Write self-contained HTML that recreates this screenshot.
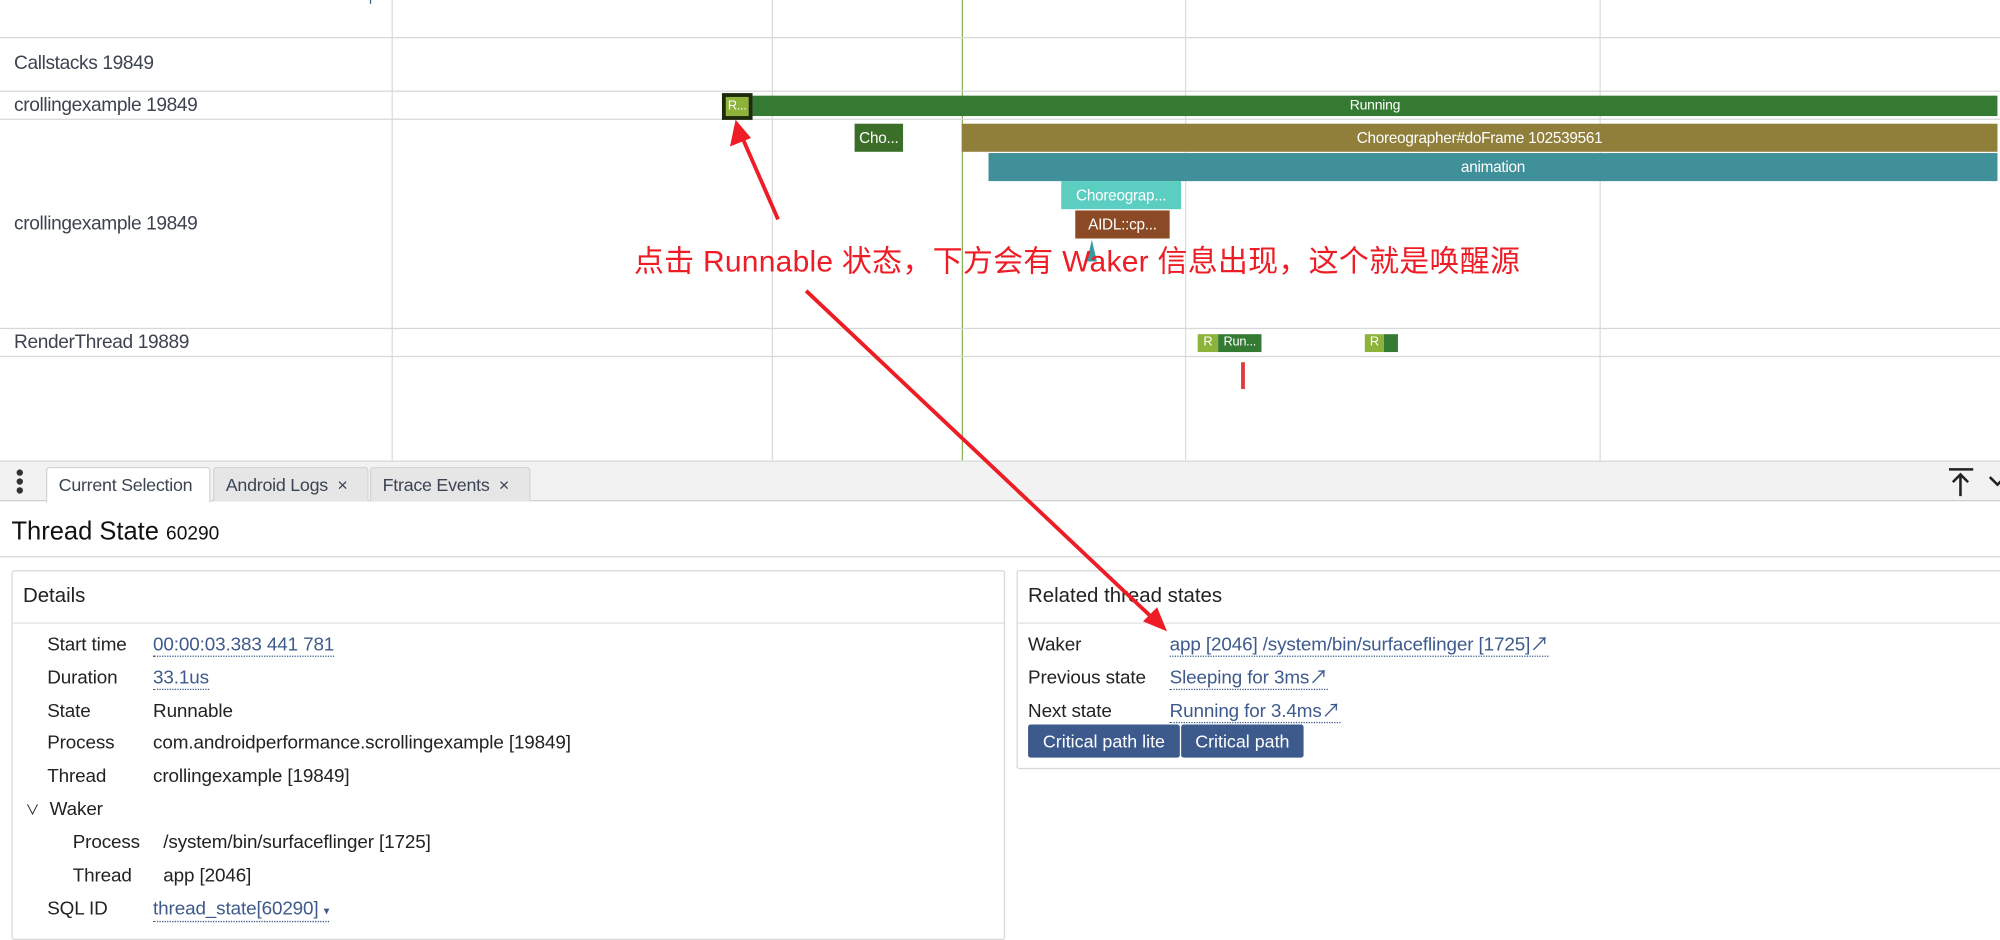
<!DOCTYPE html>
<html><head><meta charset="utf-8"><style>
html,body{margin:0;padding:0;background:#fff;overflow:hidden;width:2000px;height:932px}
#w{position:absolute;left:0;top:0;width:1568px;height:731px;transform:scale(1.27551);transform-origin:0 0;font-family:"Liberation Sans","Noto Sans CJK SC",sans-serif;color:#222}
.a{position:absolute}
.hl{position:absolute;left:0;width:1568px;height:1px;background:#d8d8d8}
.vl{position:absolute;top:0;width:1px;height:361px;background:#dcdcdc}
.lbl{position:absolute;left:11px;font-size:15px;color:#3d4350;letter-spacing:-0.3px;line-height:18px}
.sl{position:absolute;color:#fff;font-size:12px;text-align:center;line-height:22px;height:22px;overflow:hidden;white-space:nowrap;letter-spacing:-0.2px}
.tab{position:absolute;top:366px;height:27px;background:#e6e6e6;font-size:14px;color:#3b4453;line-height:27px;box-sizing:border-box;padding-left:9px;border:1px solid #d4d4d4;border-bottom:none;border-radius:3px 3px 0 0;letter-spacing:-0.2px}
.card{position:absolute;top:447px;border:1px solid #d8d8d8;border-radius:2px;box-sizing:border-box}
.ch{position:absolute;left:0;right:0;top:0;height:40px;border-bottom:1px solid #e2e2e2;font-size:16px;line-height:40px;padding-left:8px;color:#222}
.k,.v{position:absolute;font-size:14.8px;line-height:18px;color:#222;letter-spacing:-0.1px;white-space:nowrap}
.v.l{color:#3e5a8c;border-bottom:1px dotted #3e5a8c;line-height:16px}
.btn{position:absolute;top:568px;height:26px;background:#3d5a8c;color:#fff;font-size:14px;line-height:26px;text-align:center;border-radius:2px}
</style></head><body><div id="w">
<div class="vl" style="left:307px"></div>
<div class="vl" style="left:605px"></div>
<div class="vl" style="left:929px"></div>
<div class="vl" style="left:1254px"></div>
<div class="vl" style="left:754px;background:#8bb35a"></div>
<div class="hl" style="top:29px"></div>
<div class="hl" style="top:71px"></div>
<div class="hl" style="top:93px"></div>
<div class="hl" style="top:257px"></div>
<div class="hl" style="top:279px"></div>
<div class="a" style="left:290px;top:0;width:1px;height:3px;background:#3d5a8c"></div>
<div class="lbl" style="top:41px">Callstacks 19849</div>
<div class="lbl" style="top:74px">crollingexample 19849</div>
<div class="lbl" style="top:167px">crollingexample 19849</div>
<div class="lbl" style="top:260px">RenderThread 19889</div>

<div class="sl" style="left:590px;top:75px;width:976px;height:16px;line-height:16px;background:#347a33;font-size:11px">Running</div>
<div class="a" style="left:566px;top:73px;width:24px;height:21px;background:#1f2a0c"></div>
<div class="sl" style="left:569px;top:76px;width:18px;height:15px;line-height:15px;background:#8db33a;font-size:10px">R...</div>
<div class="sl" style="left:670px;top:97px;width:38px;background:#3b6e28">Cho...</div>
<div class="sl" style="left:754px;top:97px;width:812px;background:#8f7f3b">Choreographer#doFrame 102539561</div>
<div class="sl" style="left:775px;top:120px;width:791px;background:#40909a">animation</div>
<div class="sl" style="left:832px;top:142px;width:94px;background:#5ccdc1">Choreograp...</div>
<div class="sl" style="left:843px;top:165px;width:74px;background:#8b4a25">AIDL::cp...</div>
<div class="a" style="left:852px;top:188px;width:0;height:0;border-left:4px solid transparent;border-right:4px solid transparent;border-bottom:17px solid #3a9aa0"></div>

<div class="sl" style="left:939px;top:262px;width:16px;height:14px;line-height:14px;background:#8db33a;font-size:10px">R</div>
<div class="sl" style="left:955px;top:262px;width:34px;height:14px;line-height:14px;background:#347a33;font-size:10px">Run...</div>
<div class="sl" style="left:1070px;top:262px;width:15px;height:14px;line-height:14px;background:#8db33a;font-size:10px">R</div>
<div class="a" style="left:1085px;top:262px;width:11px;height:14px;background:#347a33"></div>
<div class="a" style="left:973px;top:284px;width:3px;height:21px;background:#e0393e"></div>

<div class="a" style="left:497px;top:190px;font-size:23.5px;line-height:30px;color:#ee1c25;white-space:nowrap;letter-spacing:0.2px">点击 Runnable 状态，下方会有 Waker 信息出现，这个就是唤醒源</div>

<!-- bottom panel -->
<div class="a" style="left:0;top:361px;width:1568px;height:32px;background:#f2f2f2;border-top:1px solid #d8d8d8;border-bottom:1px solid #d0d0d0;box-sizing:border-box"></div>
<div class="a" style="left:13px;top:368px;width:5px;height:5px;border-radius:50%;background:#333"></div>
<div class="a" style="left:13px;top:375px;width:5px;height:5px;border-radius:50%;background:#333"></div>
<div class="a" style="left:13px;top:382px;width:5px;height:5px;border-radius:50%;background:#333"></div>
<div class="tab" style="left:36px;width:129px;background:#fff;height:28px">Current Selection</div>
<div class="tab" style="left:167px;width:122px">Android Logs &nbsp;×</div>
<div class="tab" style="left:290px;width:126px">Ftrace Events &nbsp;×</div>
<svg class="a" style="left:1525px;top:366px" width="43" height="24"><g stroke="#222" stroke-width="2" fill="none"><line x1="3" y1="2" x2="22" y2="2"/><line x1="12" y1="6" x2="12" y2="23"/><polyline points="6,12 12,6 18,12"/><polyline points="35,8 41,14 47,8"/></g></svg>

<div class="a" style="left:9px;top:405px;font-size:20px;line-height:24px;color:#111;white-space:nowrap">Thread State <span style="font-size:15px">60290</span></div>
<div class="hl" style="top:436px"></div>

<div class="card" style="left:9px;width:779px;height:290px">
<div class="ch">Details</div></div>
<div class="k" style="left:37px;top:497px">Start time</div><div class="v l" style="left:120px;top:498px">00:00:03.383 441 781</div>
<div class="k" style="left:37px;top:523px">Duration</div><div class="v l" style="left:120px;top:524px">33.1us</div>
<div class="k" style="left:37px;top:549px">State</div><div class="v" style="left:120px;top:549px">Runnable</div>
<div class="k" style="left:37px;top:574px">Process</div><div class="v" style="left:120px;top:574px">com.androidperformance.scrollingexample [19849]</div>
<div class="k" style="left:37px;top:600px">Thread</div><div class="v" style="left:120px;top:600px">crollingexample [19849]</div>
<div class="k" style="left:20px;top:626px"><span style="font-size:11px">∨</span>&nbsp; Waker</div>
<div class="k" style="left:57px;top:652px">Process</div><div class="v" style="left:128px;top:652px">/system/bin/surfaceflinger [1725]</div>
<div class="k" style="left:57px;top:678px">Thread</div><div class="v" style="left:128px;top:678px">app [2046]</div>
<div class="k" style="left:37px;top:704px">SQL ID</div><div class="v l" style="left:120px;top:705px">thread_state[60290] <span style="font-size:9px">▾</span></div>

<div class="card" style="left:797px;width:775px;height:156px">
<div class="ch">Related thread states</div></div>
<div class="k" style="left:806px;top:497px">Waker</div><div class="v l" style="left:917px;top:498px">app [2046] /system/bin/surfaceflinger [1725]↗</div>
<div class="k" style="left:806px;top:523px">Previous state</div><div class="v l" style="left:917px;top:524px">Sleeping for 3ms↗</div>
<div class="k" style="left:806px;top:549px">Next state</div><div class="v l" style="left:917px;top:550px">Running for 3.4ms↗</div>
<div class="btn" style="left:806px;width:119px">Critical path lite</div>
<div class="btn" style="left:926px;width:96px">Critical path</div>

<svg class="a" style="left:0;top:0" width="1568" height="731">
<g stroke="#ee1c25" stroke-width="3" fill="#ee1c25">
<line x1="610" y1="172" x2="582" y2="108"/>
<polygon points="577,95 573,114 588,108" stroke-width="1"/>
<line x1="632" y1="228" x2="903" y2="484"/>
<polygon points="914,494 897,487 907,477" stroke-width="1"/>
</g></svg>
</div></body></html>
